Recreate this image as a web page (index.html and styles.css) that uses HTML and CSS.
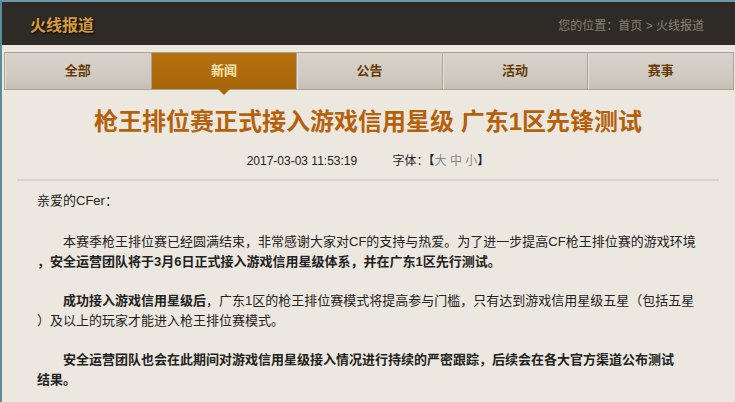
FILE: index.html
```html
<!DOCTYPE html>
<html lang="zh-CN">
<head>
    <meta charset="UTF-8">
    <meta name="viewport" content="width=device-width, initial-scale=1.0">
    <title>火线报道</title>
    <link rel="stylesheet" href="styles.css">
</head>
<body>

<div class="topbar">
    <h1>火线报道</h1>
    <div class="crumb">您的位置：<a href="#">首页</a> &gt; <a href="#">火线报道</a></div>
</div>

<ul class="tabs">
    <li><a href="#">全部</a></li>
    <li class="active"><a href="#">新闻</a></li>
    <li><a href="#">公告</a></li>
    <li><a href="#">活动</a></li>
    <li><a href="#">赛事</a></li>
</ul>

<div class="article">
    <h2>枪王排位赛正式接入游戏信用星级 广东1区先锋测试</h2>
    <div class="meta">
        <span>2017-03-03 11:53:19</span>
        <span class="size">字体：<b>【</b><a href="#">大</a> <a href="#">中</a> <a href="#">小</a><b>】</b></span>
    </div>

    <div class="content">
        <p class="hello">亲爱的CFer：</p>
        <p><span class="ind"></span>本赛季枪王排位赛已经圆满结束，非常感谢大家对CF的支持与热爱。为了进一步提高CF枪王排位赛的游戏环境<br><b>，安全运营团队将于3月6日正式接入游戏信用星级体系，并在广东1区先行测试。</b></p>
        <p><span class="ind"></span><b>成功接入游戏信用星级后</b>，广东1区的枪王排位赛模式将提高参与门槛，只有达到游戏信用星级五星（包括五星<br>）及以上的玩家才能进入枪王排位赛模式。</p>
        <p><span class="ind"></span><b>安全运营团队也会在此期间对游戏信用星级接入情况进行持续的严密跟踪，后续会在各大官方渠道公布测试<br>结果。</b></p>
    </div>
</div>

</body>
</html>
```

FILE: styles.css
```css
body {
    margin: 0;
    height: 400px;
    overflow: hidden;
    font-family: "Liberation Sans", "Noto Sans CJK SC", sans-serif;
    font-size: 13px;
    color: #222;
    background: #ece8df;
    border-top: 2px solid #6a98a8;
    border-left: 2px solid #5b8c9c;
}
a {
    text-decoration: none;
    color: inherit;
}
.topbar {
    height: 43px;
    display: flex;
    align-items: center;
    justify-content: space-between;
    padding: 0 31px 0 28px;
    background: #2e2b26;
}
.topbar h1 {
    margin: 0;
    font-size: 16px;
    font-weight: bold;
    color: #d69e3a;
    text-shadow: 1px 1px 2px #000;
}
.crumb {
    font-size: 12px;
    color: #8a8272;
    padding-top: 2px;
}
.tabs {
    list-style: none;
    margin: 7px 1px 0 2px;
    padding: 0;
    display: grid;
    grid-template-columns: repeat(5, 1fr);
    border: 1px solid #aaa296;
}
.tabs li {
    position: relative;
    border-left: 1px solid #aaa296;
    box-shadow: inset 1px 0 0 #e6e2da;
    background: linear-gradient(#d8d3ca, #d1ccc2 60%, #c6bfb4);
}
.tabs li:first-child {
    border-left: none;
}
.tabs li a {
    display: block;
    height: 36px;
    line-height: 36px;
    text-align: center;
    font-weight: bold;
    color: #673a08;
}
.tabs li.active {
    background: linear-gradient(#b5710e, #a96609);
    box-shadow: none;
}
.tabs li.active a {
    color: #f6e6b2;
}
.tabs li.active::after {
    content: "";
    position: absolute;
    left: 50%;
    bottom: -6px;
    margin-left: -6px;
    border-style: solid;
    border-width: 6px 6px 0;
    border-color: #a86508 transparent transparent;
}
.article {
    margin: 0 16px 0 15px;
}
.article h2 {
    margin: 17px 0 0;
    text-align: center;
    font-size: 24px;
    line-height: 30px;
    color: #b5600b;
}
.meta {
    margin-top: 15px;
    text-align: center;
    font-size: 12px;
    line-height: 18px;
    padding: 0 0 9px;
    border-bottom: 2px solid #d9d3c7;
}
.meta .size {
    margin-left: 32px;
}
.meta .size a {
    color: #888;
}
.content {
    padding: 10px 0 0 20px;
}
.content p {
    margin: 0 0 19px;
    line-height: 20px;
}
.content p.hello {
    margin-bottom: 21px;
}
.ind {
    display: inline-block;
    width: 26px;
}
```
